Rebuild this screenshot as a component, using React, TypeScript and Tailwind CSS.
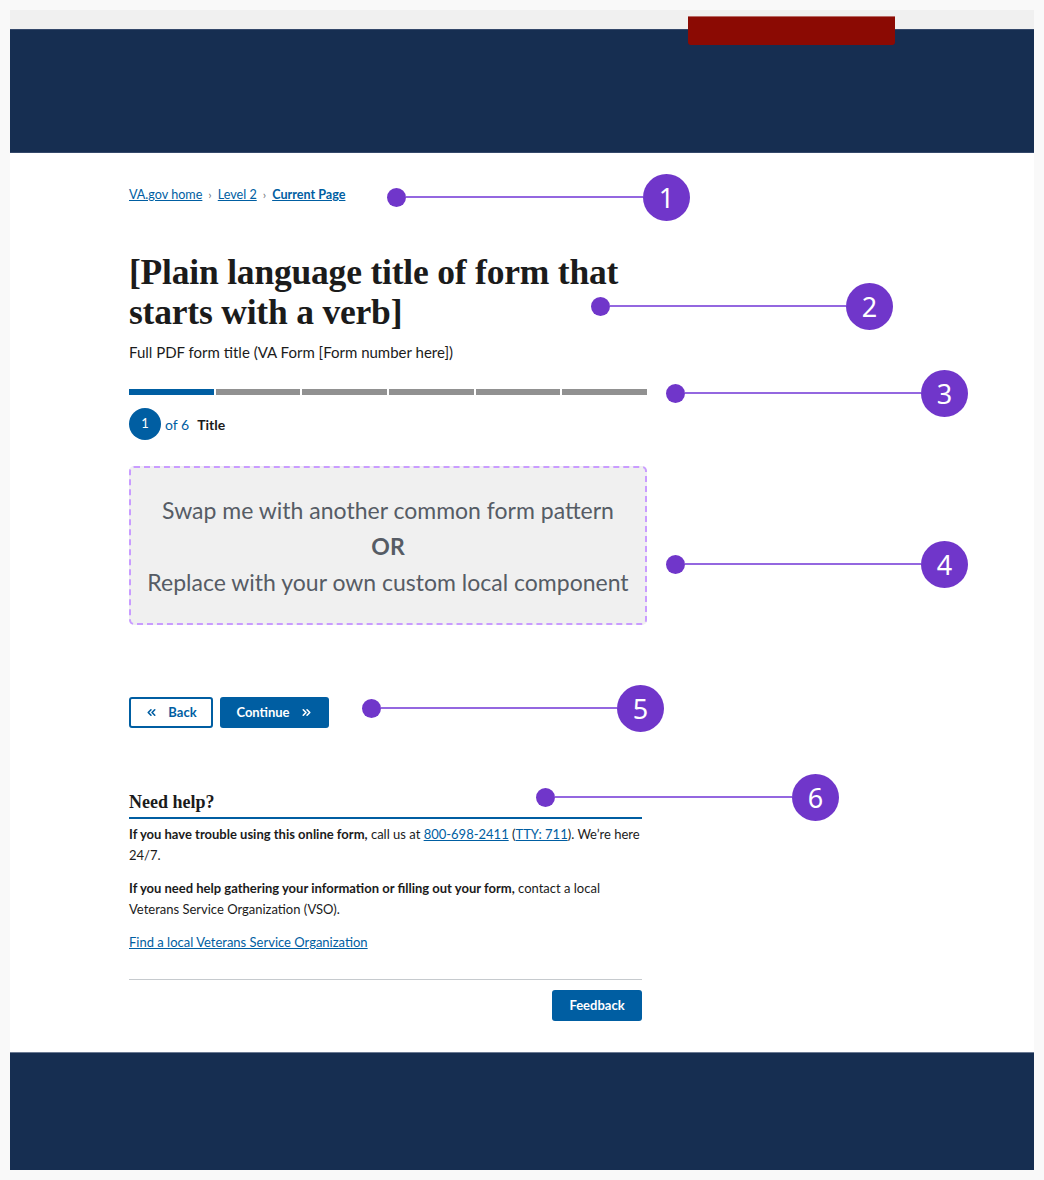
import { ChevronsLeft, ChevronsRight } from "lucide-react"

const sans = "font-['Lato','Noto_Sans',sans-serif]"
const serif = "font-['Liberation_Serif','DejaVu_Serif',serif]"

const markers = [
  { n: 1, pos: "left-[387px] top-[174px] w-[303px]" },
  { n: 2, pos: "left-[591px] top-[283px] w-[302px]" },
  { n: 3, pos: "left-[666px] top-[370px] w-[302px]" },
  { n: 4, pos: "left-[666px] top-[541px] w-[302px]" },
  { n: 5, pos: "left-[362px] top-[685px] w-[302px]" },
  { n: 6, pos: "left-[536px] top-[774px] w-[303px]" },
]

function Marker({ n, pos }: { n: number; pos: string }) {
  return (
    <div className={`absolute h-[46px] flex items-center ${pos}`}>
      <div className="w-[19px] h-[19px] rounded-full bg-[#7036ca] shrink-0" />
      <div className="flex-1 h-[2px] bg-[#9467e0]" />
      <div className="w-[47px] h-[47px] rounded-full bg-[#7036ca] shrink-0 flex items-center justify-center text-white text-[27px] font-['Noto_Sans',sans-serif] leading-none">
        {n}
      </div>
    </div>
  )
}

export default function App() {
  return (
    <div className={`relative bg-[#f9f9f9] p-[10px] min-h-[1180px] text-[#1b1b1b] ${sans}`}>
      {/* Header */}
      <div className="relative">
        <div className="h-[19px] bg-[#f0f0f0]" />
        <div className="h-[124px] bg-[#162e51] border-t border-b border-[#34486a]" />
        <div className="absolute left-[678px] top-[6px] w-[207px] h-[29px] bg-[#8b0a03] rounded-b-[3px] border-t border-[#b86a66]" />
      </div>

      {/* Content */}
      <div className="bg-white h-[899px] pl-[119px] pt-[32px]">
        <div className="w-[518px]">
          {/* Breadcrumb */}
          <nav className="flex items-center gap-[6px] text-[12.6px] leading-[20px] text-[#005ea2]">
            <a className="underline">VA.gov home</a>
            <span className="text-[#71767a] text-[12px]">›</span>
            <a className="underline">Level 2</a>
            <span className="text-[#71767a] text-[12px]">›</span>
            <a className="underline font-bold">Current Page</a>
          </nav>

          <h1 className={`mt-[47px] text-[35.5px] leading-[40px] font-bold tracking-[-0.2px] text-[#1b1b1b] ${serif}`}>
            [Plain language title of form that starts with a verb]
          </h1>
          <p className="mt-[9px] text-[15px] leading-[22px]">Full PDF form title (VA Form [Form number here])</p>

          {/* Progress */}
          <div className="mt-[26px] flex gap-[2px] h-[6px]">
            <div className="flex-1 bg-[#005ea2]" />
            <div className="flex-1 bg-[#919191]" />
            <div className="flex-1 bg-[#919191]" />
            <div className="flex-1 bg-[#919191]" />
            <div className="flex-1 bg-[#919191]" />
            <div className="flex-1 bg-[#919191]" />
          </div>
          <div className="mt-[13px] flex items-center gap-[4px] text-[14px]">
            <div className="w-[32px] h-[32px] rounded-full bg-[#005ea2] text-white text-[13px] flex items-center justify-center">1</div>
            <span className="text-[#005ea2]">of 6</span>
            <span className="ml-[4px] font-bold">Title</span>
          </div>

          {/* Placeholder */}
          <div className="mt-[26px] h-[159px] rounded-[5px] border-2 border-dashed border-[#c99cff] bg-[#f0f0f0] flex flex-col items-center justify-center text-[23px] leading-[36px] text-[#565c65]">
            <p>Swap me with another common form pattern</p>
            <p className="font-bold">OR</p>
            <p>Replace with your own custom local component</p>
          </div>

          {/* Nav buttons */}
          <div className="mt-[72px] flex gap-[7px]">
            <button className="h-[31px] w-[84px] rounded-[3px] border-2 border-[#005ea2] bg-white text-[#005ea2] text-[13px] font-bold flex items-center justify-center gap-[10px]">
              <ChevronsLeft size={13} strokeWidth={3} />
              Back
            </button>
            <button className="h-[31px] w-[109px] rounded-[3px] bg-[#005ea2] text-white text-[13px] font-bold flex items-center justify-center gap-[10px]">
              Continue
              <ChevronsRight size={13} strokeWidth={3} />
            </button>
          </div>

          {/* Need help */}
          <div className="mt-[62px] w-[513px]">
            <h2 className={`text-[18px] leading-[24px] font-bold pb-[3px] border-b-2 border-[#005ea2] ${serif}`}>Need help?</h2>
            <p className="mt-[5px] text-[13px] leading-[21px]">
              <b>If you have trouble using this online form,</b> call us at{" "}
              <a className="underline text-[#005ea2]">800-698-2411</a> (<a className="underline text-[#005ea2]">TTY: 711</a>). We’re here 24/7.
            </p>
            <p className="mt-[12px] text-[13px] leading-[21px]">
              <b>If you need help gathering your information or filling out your form,</b> contact a local Veterans Service Organization (VSO).
            </p>
            <p className="mt-[12px] text-[13px] leading-[21px]">
              <a className="underline text-[#005ea2]">Find a local Veterans Service Organization</a>
            </p>
            <div className="mt-[26px] border-t border-[#c6cace]" />
            <div className="mt-[10px] flex justify-end">
              <button className="h-[31px] w-[90px] rounded-[3px] bg-[#005ea2] text-white text-[13px] font-bold">Feedback</button>
            </div>
          </div>
        </div>
      </div>

      {/* Footer */}
      <div className="h-[118px] bg-[#162e51] border-t border-[#6b7a93]" />

      {markers.map((m) => (
        <Marker key={m.n} n={m.n} pos={m.pos} />
      ))}
    </div>
  )
}
